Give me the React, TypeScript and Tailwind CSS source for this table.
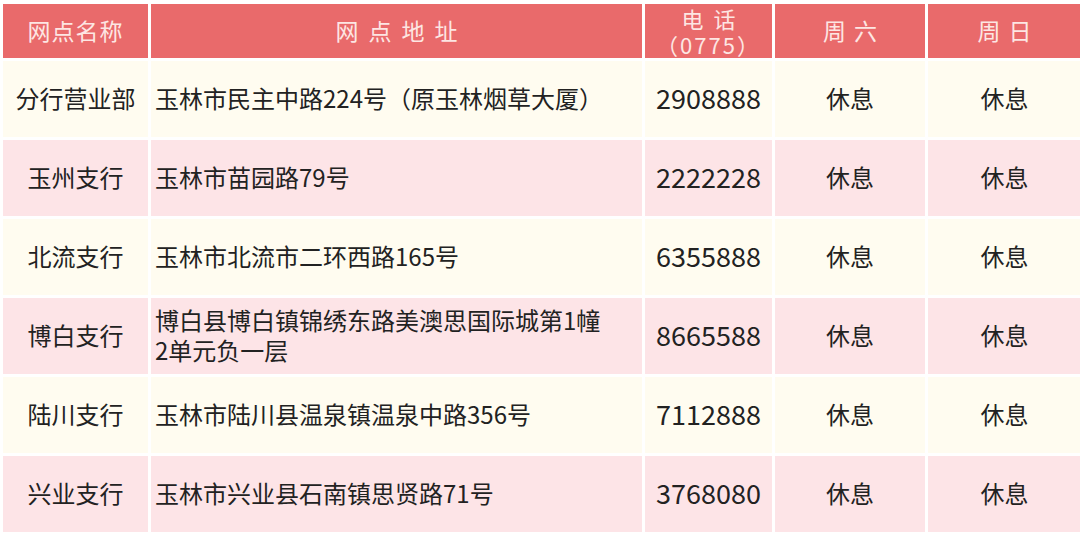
const rows = [
  { name: '分行营业部', addr: '玉林市民主中路224号（原玉林烟草大厦）', tel: '2908888' },
  { name: '玉州支行', addr: '玉林市苗园路79号', tel: '2222228' },
  { name: '北流支行', addr: '玉林市北流市二环西路165号', tel: '6355888' },
  { name: '博白支行', addr: '博白县博白镇锦绣东路美澳思国际城第1幢2单元负一层', tel: '8665588' },
  { name: '陆川支行', addr: '玉林市陆川县温泉镇温泉中路356号', tel: '7112888' },
  { name: '兴业支行', addr: '玉林市兴业县石南镇思贤路71号', tel: '3768080' },
];

const font = { fontFamily: '"Noto Sans CJK SC", "Noto Sans", sans-serif' };

export default function App() {
  return (
    <div className="w-[1080px] h-[541px] bg-white pt-[4px] pl-[3px] overflow-hidden" style={font}>
      <div className="grid grid-cols-[145px_491px_127px_150px_153px] grid-rows-[54px] auto-rows-[76px] gap-[3px]">
        <div className="bg-[#e96a6b] text-[#fde6e3] text-[23px] flex items-center justify-center tracking-[1px] pb-[2px]">
          网点名称
        </div>
        <div className="bg-[#e96a6b] text-[#fde6e3] text-[23px] flex items-center justify-center tracking-[10px] pl-[10px] pb-[2px]">
          网点地址
        </div>
        <div className="bg-[#e96a6b] text-[#fde6e3] text-[22px] flex flex-col items-center justify-center leading-[26px] pb-[1px]">
          <span className="tracking-[10px] pl-[10px]">电话</span>
          <span className="tracking-[2px]">（0775）</span>
        </div>
        <div className="bg-[#e96a6b] text-[#fde6e3] text-[23px] flex items-center justify-center tracking-[8px] pl-[8px] pb-[2px]">
          周六
        </div>
        <div className="bg-[#e96a6b] text-[#fde6e3] text-[23px] flex items-center justify-center tracking-[8px] pl-[8px] pb-[2px]">
          周日
        </div>
        {rows.map((r, i) => {
          const bg = i % 2 === 0 ? 'bg-[#fffcf0]' : 'bg-[#fde4e7]';
          return [
            <div key={r.name + 'n'} className={`${bg} text-[#222] text-[24px] flex items-center justify-center pb-[2px]`}>
              {r.name}
            </div>,
            <div key={r.name + 'a'} className={`${bg} text-[#222] text-[24px] leading-[30px] flex items-center pl-[4px] pr-[32px] pb-[2px]`}>
              {r.addr}
            </div>,
            <div key={r.name + 't'} className={`${bg} text-[#222] text-[27px] flex items-center justify-center pb-[2px]`}>
              {r.tel}
            </div>,
            <div key={r.name + 's'} className={`${bg} text-[#222] text-[24px] flex items-center justify-center pb-[2px]`}>
              休息
            </div>,
            <div key={r.name + 'u'} className={`${bg} text-[#222] text-[24px] flex items-center justify-center pb-[2px]`}>
              休息
            </div>,
          ];
        })}
      </div>
    </div>
  );
}
